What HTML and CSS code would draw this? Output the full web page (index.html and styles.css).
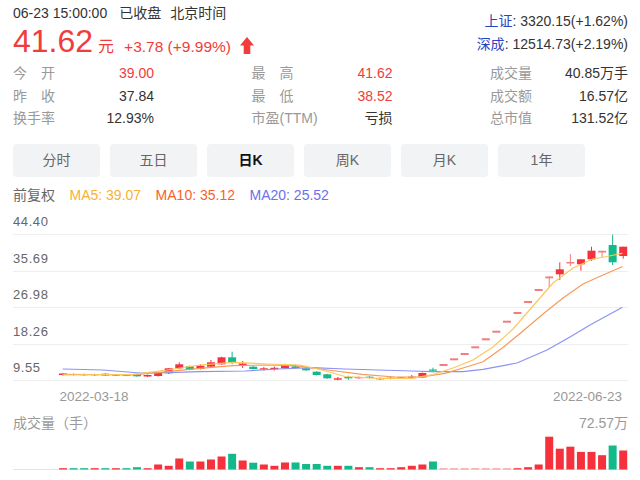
FILE: index.html
```html
<!DOCTYPE html>
<html lang="zh-CN">
<head>
<meta charset="utf-8">
<title>日K</title>
<link rel="stylesheet" href="styles.css">
</head>
<body>
<div class="page">
  <header class="quote">
    <div class="quote-main">
      <div class="quote-time"><span>06-23 15:00:00</span><span class="status">已收盘</span><span class="zone">北京时间</span></div>
      <div class="quote-price"><span class="price">41.62</span><span class="unit">元</span><span class="change">+3.78 (+9.99%)</span><svg class="arrow" viewBox="0 0 14 17" width="14" height="17"><path d="M7 0 L14 8.5 L10.3 8.5 L10.3 17 L3.7 17 L3.7 8.5 L0 8.5 Z"/></svg></div>
    </div>
    <div class="quote-index">
      <div class="index-row"><span class="index-name">上证</span>: 3320.15(+1.62%)</div>
      <div class="index-row"><span class="index-name">深成</span>: 12514.73(+2.19%)</div>
    </div>
  </header>

  <section class="stats">
    <div class="stat"><span class="stat-label">今　开</span><span class="stat-value up">39.00</span></div>
    <div class="stat"><span class="stat-label">最　高</span><span class="stat-value up">41.62</span></div>
    <div class="stat"><span class="stat-label">成交量</span><span class="stat-value">40.85万手</span></div>
    <div class="stat"><span class="stat-label">昨　收</span><span class="stat-value">37.84</span></div>
    <div class="stat"><span class="stat-label">最　低</span><span class="stat-value up">38.52</span></div>
    <div class="stat"><span class="stat-label">成交额</span><span class="stat-value">16.57亿</span></div>
    <div class="stat"><span class="stat-label">换手率</span><span class="stat-value">12.93%</span></div>
    <div class="stat"><span class="stat-label">市盈(TTM)</span><span class="stat-value">亏损</span></div>
    <div class="stat"><span class="stat-label">总市值</span><span class="stat-value">131.52亿</span></div>
  </section>

  <nav class="tabs">
    <div class="tab">分时</div>
    <div class="tab">五日</div>
    <div class="tab active">日K</div>
    <div class="tab">周K</div>
    <div class="tab">月K</div>
    <div class="tab">1年</div>
  </nav>

  <div class="legend">
    <span class="legend-adj">前复权</span>
    <span class="ma5">MA5: 39.07</span>
    <span class="ma10">MA10: 35.12</span>
    <span class="ma20">MA20: 25.52</span>
  </div>

  <svg class="kline" viewBox="13 205 615 198" width="615" height="198">
    <g class="grid">
      <line x1="13" x2="628" y1="234.5" y2="234.5"/>
      <line x1="13" x2="628" y1="271.5" y2="271.5"/>
      <line x1="13" x2="628" y1="307.5" y2="307.5"/>
      <line x1="13" x2="628" y1="344.5" y2="344.5"/>
      <line x1="13" x2="628" y1="380.5" y2="380.5"/>
    </g>
    <g class="axis-y">
      <text x="13" y="226">44.40</text>
      <text x="13" y="262.5">35.69</text>
      <text x="13" y="299">26.98</text>
      <text x="13" y="335.5">18.26</text>
      <text x="13" y="372">9.55</text>
    </g>
    <g id="candles"></g>
    <polyline class="line-ma20" points="63,369 103,370 140,373 167,372.7 200,371.7 245,371 278,369 312,367.7 345,369 378,370 412,371 432,371.7 463,371.7 483,369.3 517,363 547,350 570,337 590,325 622,307.5"/>
    <polyline class="line-ma10" points="63,374.3 133,375 167,371.7 200,368.3 233,365.7 267,365 295,365.7 328,370 362,374.3 395,377 422,377 445,373.3 463,368 483,361.7 503,347.5 523,331 543,314 563,298 583,284 603,275 622,266.7"/>
    <polyline class="line-ma5" points="63,375 100,374.5 133,374.3 167,370 200,365 233,362.3 267,364 300,365 322,370 345,376.5 378,378.3 412,378.3 433,374.5 453,368 473,360 493,347 513,329 533,306 553,283 573,268 593,259 607,256.5 622,253.3"/>
    <g class="axis-x">
      <text x="59.5" y="400.5">2022-03-18</text>
      <text x="622" y="400.5" text-anchor="end">2022-06-23</text>
    </g>
  </svg>

  <div class="vol-head">
    <span>成交量（手）</span>
    <span>72.57万</span>
  </div>

  <svg class="vol" viewBox="13 433 615 40" width="615" height="40">
    <line class="vol-base" x1="13" x2="628" y1="469.5" y2="469.5"/>
    <g id="vol-bars"></g>
  </svg>
</div>
<script src="script.js"></script>
</body>
</html>
```

FILE: styles.css
```css
* { box-sizing: border-box; }
html, body { margin: 0; padding: 0; background: #fff; }
body {
  font-family: "Liberation Sans", Arial, "Noto Sans CJK SC", sans-serif;
  font-size: 14px;
  color: #333;
}
.page {
  width: 640px;
  height: 480px;
  padding: 3px 12px 0 13px;
  overflow: hidden;
}

/* header */
.quote { display: flex; justify-content: space-between; align-items: flex-start; }
.quote-time { height: 20px; line-height: 20px; color: #333; white-space: nowrap; }
.quote-time .status { margin-left: 12px; }
.quote-time .zone { margin-left: 9px; }
.quote-price { height: 36px; line-height: 36px; color: #f23b3b; white-space: nowrap; }
.price { font-size: 32px; }
.unit { font-size: 16px; margin-left: 5px; }
.change { font-size: 15.5px; margin-left: 10px; }
.arrow { margin-left: 9px; vertical-align: -2px; fill: #f23b3b; }
.quote-index { padding-top: 6.5px; text-align: right; line-height: 23px; white-space: nowrap; }
.index-name { color: #2a45c2; }

/* stats */
.stats {
  display: grid;
  grid-template-columns: 141px 141px 138px;
  justify-content: space-between;
  margin-top: 3px;
  line-height: 22.5px;
}
.stat { display: flex; justify-content: space-between; white-space: nowrap; }
.stat-label { color: #999; }
.stat-value { color: #333; }
.stat-value.up { color: #f23b3b; }

/* tabs */
.tabs { display: flex; gap: 10px; margin-top: 14.5px; }
.tab {
  width: 87px;
  height: 33px;
  line-height: 33px;
  text-align: center;
  background: #f2f3f5;
  border-radius: 4px;
  color: #666;
}
.tab.active { color: #111; font-weight: bold; }

/* legend */
.legend { display: flex; gap: 14.5px; margin-top: 8px; height: 20px; line-height: 20px; white-space: nowrap; }
.legend-adj { color: #666; }
.ma5 { color: #fbb034; }
.ma10 { color: #fa5f2a; }
.ma20 { color: #6c6ff0; }

/* chart */
.kline, .vol { display: block; }
.grid line { stroke: #eeeeee; stroke-width: 1; }
.axis-y text { font-family: "Liberation Sans", Arial, sans-serif; font-size: 13px; letter-spacing: 0.6px; fill: #666; }
.axis-x text { font-family: "Liberation Sans", Arial, sans-serif; font-size: 13.5px; fill: #999; }
.line-ma5, .line-ma10, .line-ma20 { fill: none; stroke-width: 1.2; stroke-linejoin: round; stroke-linecap: round; }
.line-ma5 { stroke: #fdc75a; }
.line-ma10 { stroke: #f99a58; }
.line-ma20 { stroke: #8a93f3; }

/* volume */
.vol-head {
  display: flex;
  justify-content: space-between;
  margin-top: 10px;
  height: 20px;
  line-height: 20px;
  color: #999;
}
.vol-base { stroke: #e3e3e3; stroke-width: 1; }
```

FILE: script.js
```js
(function () {
  var NS = 'http://www.w3.org/2000/svg';
  var RED = '#f5313b', GREEN = '#14b98a', PINK = '#f47c80', PINKV = '#f7a3a5';
  var X0 = 63, STEP = 10.57, W = 8;

  function el(tag, attrs, parent) {
    var e = document.createElementNS(NS, tag);
    for (var k in attrs) e.setAttribute(k, attrs[k]);
    parent.appendChild(e);
    return e;
  }
  function color(c) { return c === 'r' ? RED : c === 'g' ? GREEN : PINK; }

  /* [bodyTop, bodyBottom, wickTop, wickBottom, colour] in chart pixels */
  var candles = [
    [373.5,375,373,375.5,'r'],[374,375,373.5,375.5,'g'],[374,375.2,373.5,375.8,'g'],
    [374.2,375.2,373.8,375.8,'r'],[373.7,375.5,373.2,376,'g'],[374.5,375.5,374,376,'r'],
    [374.5,375.7,374,376.2,'g'],[374.3,376.3,374,376.8,'g'],[375,376.5,374.5,377,'r'],
    [372.7,376,371.5,376.5,'r'],[368.3,373.3,368,374,'r'],[364.3,368.3,362.3,368.8,'r'],
    [366.3,369.7,365.5,370.2,'g'],[365.7,369,364.3,369.5,'r'],[362.3,366.7,360,367.2,'r'],
    [357.3,364.3,356.8,364.8,'r'],[357.3,362.7,351.7,364.3,'g'],[363.5,365,361,368,'r'],
    [366.7,369,366,369.5,'g'],[368.3,369.5,367,370.5,'r'],[367.8,369.2,366.5,370.5,'r'],
    [365.7,368.3,363.8,368.8,'r'],[366.3,368,364.5,368.5,'g'],[368.3,370.3,367.8,370.8,'g'],
    [371.7,375,371.2,375.5,'g'],[374.3,378.3,373.8,378.8,'g'],[378.3,379.7,377,380.3,'r'],
    [377,378.3,375.7,379.7,'g'],[377,378.2,376.5,378.7,'r'],[376.7,378,376.2,378.5,'g'],
    [378,379.3,377.5,379.8,'r'],[377.7,378.8,377.2,379.3,'r'],[377.3,378.5,376.8,379,'r'],
    [376.7,377.7,375,378.5,'r'],[373,377.5,372.5,378,'r'],[369.5,370.7,367.7,372.3,'g'],
    [364,366,364,366,'p'],[358.3,360.3,358.3,360.3,'p'],[353,355,353,355,'p'],
    [346.3,348.3,346.3,348.3,'p'],[338.3,340.3,338.3,340.3,'p'],[330.7,332.7,330.7,332.7,'p'],
    [320.7,322.7,320.7,322.7,'p'],[312,314,312,314,'p'],[301,303,301,303,'p'],
    [289,291,289,291,'p'],[276.5,278.3,276.5,287.3,'p'],[269.3,274.3,262.3,280,'r'],
    [262,263.5,254,266,'p'],[259.3,264.3,259,270.7,'r'],[250.7,259.3,246.7,261,'r'],
    [250.8,252.5,250.8,257.3,'p'],[245,262.3,234.7,265,'g'],[246.7,256,246.7,258.7,'r']
  ];

  var cg = document.getElementById('candles');
  candles.forEach(function (c, i) {
    var cx = X0 + STEP * i, col = color(c[4]);
    if (c[3] - c[2] > c[1] - c[0]) {
      el('line', { x1: cx, x2: cx, y1: c[2], y2: c[3], stroke: col, 'stroke-width': 1 }, cg);
    }
    el('rect', { x: cx - W / 2, y: c[0], width: W, height: Math.max(c[1] - c[0], 1), fill: col }, cg);
  });

  var vol = [1.3,1.3,1.3,1.3,1.3,1.3,1.3,2.3,1.3,5,3.7,11,8,8,10,13,15.7,9,6.8,5,3.7,7,7,5.5,5.5,
    3.7,3.7,3.7,2.3,2.3,1.3,1.3,2.3,3.7,5,8,1.3,1.3,1.3,1.3,1.3,1.3,1.3,1.3,2.3,5,32.8,20.8,22.8,
    17.6,17.6,14.3,24,19];
  var vcol = 'rggrgrggrrrrgrrrgrgrrrggggrgrgrrrrrg' + 'ppppppp' + 'rrr' + 'rrrrrr' + 'g' + 'r';

  var vg = document.getElementById('vol-bars');
  vol.forEach(function (h, i) {
    var c = vcol.charAt(i);
    var fill = c === 'r' ? RED : c === 'g' ? GREEN : PINKV;
    el('rect', { x: X0 + STEP * i - W / 2, y: 469.5 - h, width: W, height: h, fill: fill }, vg);
  });
})();
```
